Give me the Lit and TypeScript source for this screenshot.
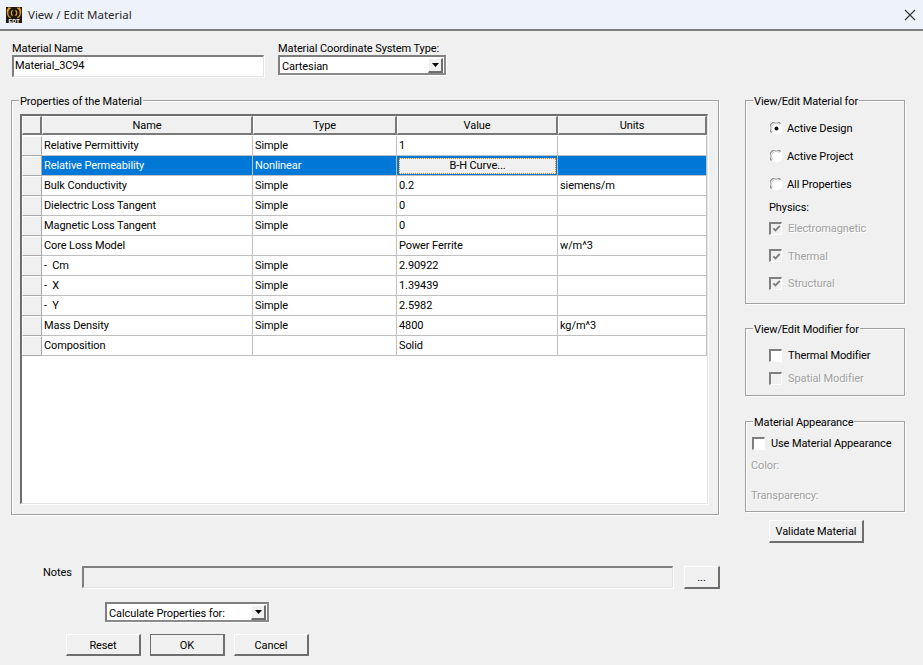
import { LitElement, html, css, svg } from "lit";
import { customElement } from "lit/decorators.js";

const rows: [string, string, string, string][] = [
  ["Relative Permittivity", "Simple", "1", ""],
  ["Relative Permeability", "Nonlinear", "B-H", ""],
  ["Bulk Conductivity", "Simple", "0.2", "siemens/m"],
  ["Dielectric Loss Tangent", "Simple", "0", ""],
  ["Magnetic Loss Tangent", "Simple", "0", ""],
  ["Core Loss Model", "", "Power Ferrite", "w/m^3"],
  ["- \u00a0Cm", "Simple", "2.90922", ""],
  ["- \u00a0X", "Simple", "1.39439", ""],
  ["- \u00a0Y", "Simple", "2.5982", ""],
  ["Mass Density", "Simple", "4800", "kg/m^3"],
  ["Composition", "", "Solid", ""],
];

const arrow = html`<span class="arrow"><svg width="7" height="4" viewBox="0 0 7 4"><path d="M0 0h7L3.500 4z" fill="#000"/></svg></span>`;

const radio = (on: boolean) => html`<svg class="radio" width="13" height="13" viewBox="0 0 13 13">
  <circle cx="6.500" cy="6.500" r="6" fill="#fff"/>
  <path d="M1.600 10.500A6 6 0 0 1 10.500 1.600" fill="none" stroke="#8a8a8a" stroke-width="1.200"/>
  <path d="M2.800 9.600A4.600 4.600 0 0 1 9.600 2.800" fill="none" stroke="#c4c4c4" stroke-width="1"/>
  ${on ? svg`<circle cx="6.500" cy="6.500" r="2" fill="#000"/>` : ""}
</svg>`;

const check = (on: boolean, disabled: boolean) => html`<span class="box ${disabled ? "dis" : ""}">${on
  ? html`<svg width="9" height="9" viewBox="0 0 9 9"><path d="M1.300 4.300l2.200 2.200L7.800 1.800" fill="none" stroke="#808080" stroke-width="1.900"/></svg>`
  : ""}</span>`;

@customElement("app-root")
export class AppRoot extends LitElement {
  static styles = css`
    :host {
      display: block;
      width: 923px;
      height: 665px;
      overflow: hidden;
      background: #f0f0f0;
      color: #000;
      font: 11px/14px Roboto, "Liberation Sans", Arial, sans-serif;
      letter-spacing: -0.1px;
    }
    .title {
      height: 29px;
      box-sizing: content-box;
      background: #eef2fb;
      border-bottom: 2px solid #7d7d7d;
      display: flex;
      align-items: center;
      padding: 0 7px 0 6px;
      gap: 6px;
      font: 11.5px "Noto Sans", "Open Sans", sans-serif;
      letter-spacing: 0;
      color: #2a2a2a;
    }
    .title .close { margin-left: auto; display: flex; }
    .top {
      display: flex;
      padding: 11px 0 0 12px;
      gap: 14px;
    }
    .field { display: flex; flex-direction: column; }
    .field label { height: 13px; line-height: 14px; }
    .sunken {
      box-sizing: border-box;
      background: #fff;
      border-style: solid;
      border-width: 2px 1px 1px 2px;
      border-color: #7f7f7f #e3e3e3 #e3e3e3 #7f7f7f;
      box-shadow: 1px 1px 0 #fff;
    }
    .name { width: 252px; height: 22px; padding-left: 1px; line-height: 17px; }
    .combo {
      display: flex;
      align-items: center;
      justify-content: space-between;
      height: 20px;
      padding: 0 1px 0 2px;
      border-width: 2px;
      border-color: #7f7f7f #8a8a8a #8a8a8a #7f7f7f;
    }
    .combo span:first-child { padding-top: 3px; }
    .combo.coord { width: 168px; }
    .combo.calc { width: 164px; }
    .arrow {
      box-sizing: border-box;
      width: 15px;
      height: 15px;
      background: #f0f0f0;
      border-style: solid;
      border-width: 1px 2px 2px 1px;
      border-color: #fff #6e6e6e #6e6e6e #fff;
      display: flex;
      align-items: center;
      justify-content: center;
    }
    .main {
      display: flex;
      margin: 23px 0 0 11px;
      gap: 26px;
      height: 443px;
    }
    .group {
      box-sizing: border-box;
      border: 1px solid #a0a0a0;
      box-shadow: inset 1px 1px 0 #fff, 1px 1px 0 #fff;
    }
    .legend {
      width: fit-content;
      margin: -8px 0 0 7px;
      padding: 0 1px;
      background: #f0f0f0;
      height: 14px;
      line-height: 18px;
    }
    .props { width: 708px; height: 415px; }
    .grid {
      box-sizing: border-box;
      width: 688px;
      height: 390px;
      margin: 7px 0 0 8px;
      background: #fff;
      border-style: solid;
      border-width: 2px 1px 1px 2px;
      border-color: #6f6f6f #e3e3e3 #e3e3e3 #6f6f6f;
      box-shadow: 1px 1px 0 #fff;
      display: grid;
      grid-template-columns: 20px 211px 144px 161px 149px;
      grid-auto-rows: 20px;
      align-content: start;
    }
    .hd, .rh {
      box-sizing: border-box;
      background: #f0f0f0;
      border-style: solid;
      border-color: #fff #7a7a7a #7a7a7a #fff;
    }
    .hd {
      height: 19px;
      border-width: 1px 2px 2px 1px;
      text-align: center;
      line-height: 18px;
      margin-bottom: 1px;
    }
    .rh { border-width: 1px; border-color: #fff #a8a8a8 #a8a8a8 #fff; }
    .cell {
      box-sizing: border-box;
      padding: 1px 0 0 2px;
      line-height: 18px;
      white-space: nowrap;
      border-right: 1px solid #c0c0c0;
      border-bottom: 1px solid #c0c0c0;
    }
    .cell.sel { background: #0078d7; color: #fff; }
    .cell.tool { padding: 2px 0 2px 2px; color: #000; }
    .bh {
      box-sizing: border-box;
      display: block;
      width: 157px;
      height: 16px;
      padding: 0;
      font: inherit;
      letter-spacing: inherit;
      line-height: 12px;
      background: #f0f0f0;
      border: 1px dotted #d9822b;
      color: #000;
    }
    .side { width: 160px; display: flex; flex-direction: column; }
    .view { height: 204px; }
    .view .inner { padding-left: 23px; }
    .view .opts { display: flex; flex-direction: column; margin-top: 7px; }
    .opt { display: flex; align-items: center; gap: 4px; height: 28px; }
    .opt span { padding-top: 2px; }
    .opt .radio { flex: none; margin-left: 1px; }
    .phys { height: 18px; line-height: 20px; }
    .checks { display: flex; flex-direction: column; gap: 3.5px; }
    .chk { display: flex; align-items: center; gap: 6px; height: 24px; }
    .view .chk span:last-child { padding-top: 2px; }
    .dis-t { color: #a0a0a0; text-shadow: 1px 1px 0 #fff; }
    .box {
      box-sizing: border-box;
      flex: none;
      width: 13px;
      height: 13px;
      background: #fff;
      border-style: solid;
      border-width: 2px 1px 1px 2px;
      border-color: #7f7f7f #fff #fff #7f7f7f;
      display: flex;
      align-items: center;
      justify-content: center;
    }
    .box.dis { background: #f0f0f0; }
    .mod { height: 68px; margin-top: 24px; }
    .mod .checks { gap: 0; margin: 9px 0 0 23px; }
    .mod .chk { height: 23px; }
    .app { height: 91px; margin-top: 25px; }
    .app .chk { height: 22px; margin: 4px 0 0 6px; }
    .app .chk span:last-child { padding-top: 2px; }
    .app .lab { height: 30px; margin: 5px 0 0 5px; }
    .app .lab + .lab { margin-top: 0; }
    button.raised {
      box-sizing: border-box;
      font: inherit;
      letter-spacing: inherit;
      padding: 2px 0 0;
      background: #f0f0f0;
      color: #000;
      border-style: solid;
      border-width: 1px 2px 2px 1px;
      border-color: #fff #6e6e6e #6e6e6e #fff;
    }
    .validate { width: 95px; height: 23px; margin: 8px 0 0 24px; }
    .notes {
      display: flex;
      align-items: flex-start;
      margin: 23px 0 0 43px;
    }
    .notes .lbl { width: 39px; line-height: 13px; }
    .notes .area { width: 591px; height: 22px; background: #f0f0f0; }
    .notes .more { width: 36px; height: 23px; margin-left: 11px; }
    .calcrow { margin: 13px 0 0 105px; }
    .actions { display: flex; gap: 9px; margin: 12px 0 0 66px; }
    .actions button { width: 75px; height: 22px; }
    .actions button.def { outline: 1px solid #6e6e6e; outline-offset: -1px; }
  `;

  render() {
    return html`
      <div class="title">
        <svg width="16" height="16" viewBox="0 0 16 16">
          <rect width="16" height="16" fill="#1c170a"/>
          <g fill="none" stroke="#e0a020" stroke-width="1.300">
            <path d="M6.600 3.200a2 2.900 0 0 0 0 5.400"/>
            <path d="M4.700 1a3.800 4.900 0 0 0 0 9.600"/>
            <path d="M9.400 3.200a2 2.900 0 0 1 0 5.400"/>
            <path d="M11.300 1a3.800 4.900 0 0 1 0 9.600"/>
            <path d="M3 .5a5.500 6 0 0 0 -1.500 5.500"/>
            <path d="M13 .5a5.500 6 0 0 1 1.500 5.500"/>
          </g>
          <text x="8" y="15.500" text-anchor="middle" font-family="Liberation Sans" font-weight="700" font-size="5.500" fill="#fff">EDT</text>
        </svg>
        <span>View / Edit Material</span>
        <span class="close"><svg width="12" height="12" viewBox="0 0 12 12"><path d="M1 1l10 10M11 1L1 11" stroke="#333" stroke-width="1.100" fill="none"/></svg></span>
      </div>

      <div class="top">
        <div class="field">
          <label>Material Name</label>
          <div class="sunken name">Material_3C94</div>
        </div>
        <div class="field">
          <label>Material Coordinate System Type:</label>
          <div class="sunken combo coord"><span>Cartesian</span>${arrow}</div>
        </div>
      </div>

      <div class="main">
        <div class="group props">
          <div class="legend">Properties of the Material</div>
          <div class="grid">
            <div class="hd"></div>
            <div class="hd">Name</div>
            <div class="hd">Type</div>
            <div class="hd">Value</div>
            <div class="hd">Units</div>
            ${rows.map((r, i) => {
              const s = i === 1 ? "sel" : "";
              return html`
                <div class="rh"></div>
                <div class="cell ${s}">${r[0]}</div>
                <div class="cell ${s}">${r[1]}</div>
                ${r[2] === "B-H"
                  ? html`<div class="cell sel tool"><button class="bh">B-H Curve...</button></div>`
                  : html`<div class="cell ${s}">${r[2]}</div>`}
                <div class="cell ${s}">${r[3]}</div>
              `;
            })}
          </div>
        </div>

        <div class="side">
          <div class="group view">
            <div class="legend">View/Edit Material for</div>
            <div class="inner">
              <div class="opts">
                <div class="opt">${radio(true)}<span>Active Design</span></div>
                <div class="opt">${radio(false)}<span>Active Project</span></div>
                <div class="opt">${radio(false)}<span>All Properties</span></div>
              </div>
              <div class="phys">Physics:</div>
              <div class="checks">
                <div class="chk">${check(true, true)}<span class="dis-t">Electromagnetic</span></div>
                <div class="chk">${check(true, true)}<span class="dis-t">Thermal</span></div>
                <div class="chk">${check(true, true)}<span class="dis-t">Structural</span></div>
              </div>
            </div>
          </div>

          <div class="group mod">
            <div class="legend">View/Edit Modifier for</div>
            <div class="checks">
              <div class="chk">${check(false, false)}<span>Thermal Modifier</span></div>
              <div class="chk">${check(false, true)}<span class="dis-t">Spatial Modifier</span></div>
            </div>
          </div>

          <div class="group app">
            <div class="legend">Material Appearance</div>
            <div class="chk">${check(false, false)}<span>Use Material Appearance</span></div>
            <div class="lab dis-t">Color:</div>
            <div class="lab dis-t">Transparency:</div>
          </div>

          <button class="raised validate">Validate Material</button>
        </div>
      </div>

      <div class="notes">
        <div class="lbl">Notes</div>
        <div class="sunken area"></div>
        <button class="raised more">...</button>
      </div>

      <div class="calcrow">
        <div class="sunken combo calc"><span>Calculate Properties for:</span>${arrow}</div>
      </div>

      <div class="actions">
        <button class="raised">Reset</button>
        <button class="raised def">OK</button>
        <button class="raised">Cancel</button>
      </div>
    `;
  }
}
